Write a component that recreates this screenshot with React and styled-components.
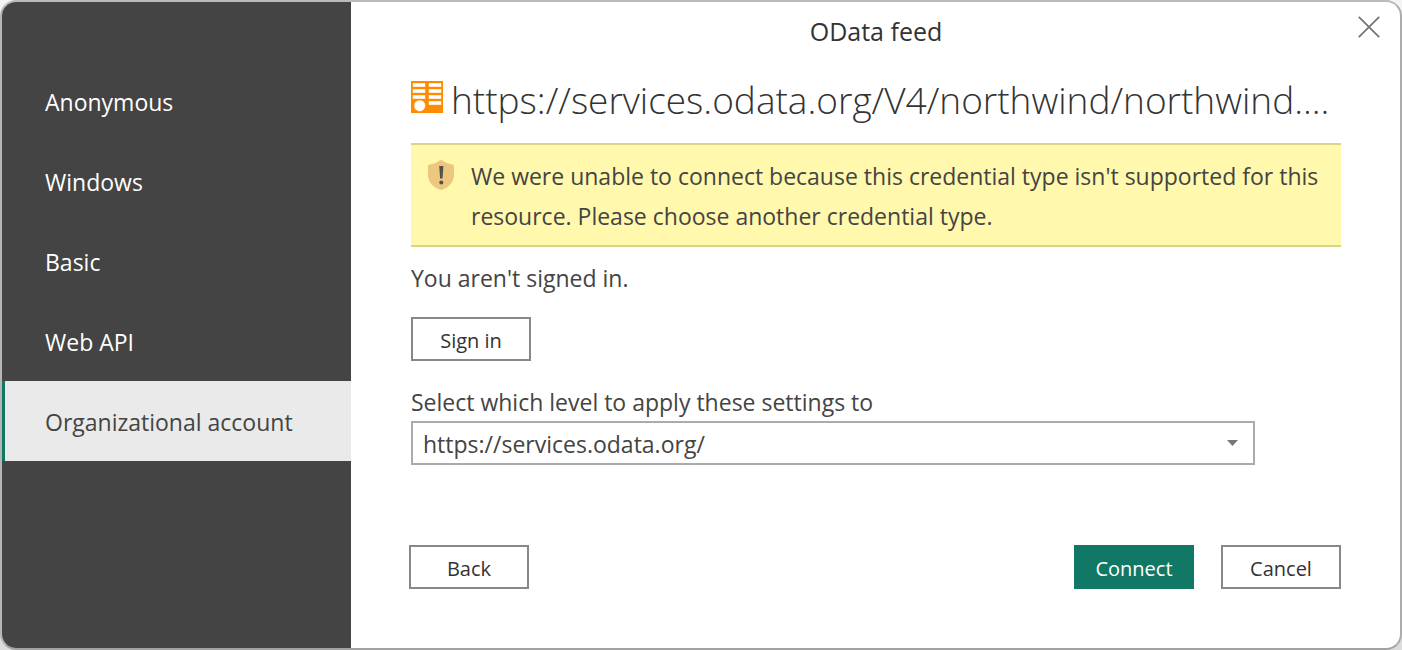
import React, { useState } from "react";
import styled, { createGlobalStyle } from "styled-components";

const GlobalStyle = createGlobalStyle`
  *, *::before, *::after { box-sizing: border-box; }
  body {
    margin: 0;
    background: linear-gradient(#f4f4f4, #dcdcdc);
    color: #444444;
    font-family: "Open Sans", "Noto Sans", sans-serif;
    font-size: 23px;
    line-height: 32px;
  }
  button, select { font-family: inherit; color: inherit; }
  h1, h2, p { margin: 0; font-weight: 400; }
`;

const Dialog = styled.div`
  display: flex;
  min-height: 100vh;
  border: 2px solid;
  border-color: #bababa #acacac #a2a2a2 #b6b6b6;
  border-radius: 16px;
  background: #ffffff;
  overflow: hidden;
`;

const Sidebar = styled.nav`
  flex: 0 0 349px;
  padding-top: 59px;
  background: #444444;
`;

const NavItem = styled.button`
  display: block;
  width: 100%;
  height: 80px;
  padding: 2px 16px 0 40px;
  border: 0;
  border-left: 3px solid ${(p) => (p.$selected ? "#117865" : "transparent")};
  background: ${(p) => (p.$selected ? "#eaeaea" : "transparent")};
  color: ${(p) => (p.$selected ? "#444444" : "#ffffff")};
  font-size: 23px;
  line-height: 32px;
  text-align: left;
  cursor: pointer;
`;

const Main = styled.main`
  position: relative;
  flex: 1;
  min-width: 0;
  display: flex;
  flex-direction: column;
  padding: 12px 59px 59px 60px;
`;

const Title = styled.h1`
  font-size: 25px;
  line-height: 34px;
  color: #333333;
  text-align: center;
`;

const CloseButton = styled.button`
  position: absolute;
  top: 7px;
  right: 14px;
  display: flex;
  padding: 5px;
  border: 0;
  background: transparent;
  cursor: pointer;
`;

const Source = styled.div`
  display: flex;
  align-items: flex-start;
  gap: 8px;
  margin-top: 21px;
  padding-top: 12px;
`;

const SourceIcon = styled.svg`
  flex: none;
`;

const SourceUrl = styled.h2`
  flex: 1;
  min-width: 0;
  height: 62px;
  margin-top: -8px;
  font-size: 37px;
  font-weight: 300;
  line-height: 54px;
  color: #333333;
  white-space: nowrap;
`;

const Warning = styled.div`
  display: flex;
  gap: 17px;
  margin-top: 8px;
  padding: 11px 16px 9px 17px;
  border: solid #d8d58b;
  border-width: 2px 0;
  background: #fff8ad;
  line-height: 40px;
`;

const Shield = styled.svg`
  flex: none;
  margin-top: 4px;
`;

const Status = styled.p`
  margin-top: 15px;
`;

const Button = styled.button`
  width: 120px;
  height: 44px;
  padding: 4px 0 0;
  border: 2px solid ${(p) => (p.$primary ? "#117865" : "#888888")};
  background: ${(p) => (p.$primary ? "#117865" : "#ffffff")};
  color: ${(p) => (p.$primary ? "#ffffff" : "#333333")};
  font-size: 20px;
  line-height: 28px;
  cursor: pointer;
`;

const SignInButton = styled(Button)`
  margin-top: 23px;
`;

const Label = styled.label`
  display: block;
  margin-top: 25px;
  margin-bottom: 3px;
`;

const SelectBox = styled.div`
  display: grid;
  align-items: center;
  margin-right: 86px;
  > * { grid-area: 1 / 1; }
`;

const Select = styled.select`
  appearance: none;
  width: 100%;
  height: 44px;
  padding: 2px 40px 0 10px;
  border: 2px solid #ababab;
  border-radius: 0;
  background: #ffffff;
  font-size: 23px;
`;

const Arrow = styled.svg`
  justify-self: end;
  margin-right: 17px;
  pointer-events: none;
`;

const Footer = styled.footer`
  display: flex;
  gap: 27px;
  margin-top: auto;
  margin-left: -2px;
  padding-top: 32px;
`;

const BackButton = styled(Button)`
  margin-right: auto;
`;

const kinds = ["Anonymous", "Windows", "Basic", "Web API", "Organizational account"];

export default function App() {
  const [kind, setKind] = useState("Organizational account");
  return (
    <>
      <GlobalStyle />
      <Dialog role="dialog" aria-labelledby="dialog-title">
        <Sidebar aria-label="Credential type">
          {kinds.map((k) => (
            <NavItem key={k} $selected={k === kind} onClick={() => setKind(k)}>
              {k}
            </NavItem>
          ))}
        </Sidebar>
        <Main>
          <Title id="dialog-title">OData feed</Title>
          <CloseButton aria-label="Close">
            <svg width="24" height="24" viewBox="0 0 24 24" fill="none" stroke="#767676" strokeWidth="1.8">
              <path d="M1.8 2.8 22.2 23.2M22.2 2.8 1.8 23.2" />
            </svg>
          </CloseButton>
          <Source>
            <SourceIcon width="32" height="32" viewBox="0 0 32 32" aria-hidden="true">
              <rect width="32" height="32" fill="#ff8c00" />
              <g fill="#ffffff">
                <rect x="1.800" y="2.200" width="12.400" height="3.600" />
                <rect x="1.800" y="8.200" width="12.400" height="3.600" />
                <rect x="1.800" y="14.200" width="12.400" height="3.600" />
                <rect x="17.800" y="2.200" width="12.400" height="3.600" />
                <rect x="17.800" y="8.200" width="12.400" height="3.600" />
                <rect x="17.800" y="14.200" width="12.400" height="3.600" />
                <rect x="17.800" y="20.200" width="12.400" height="3.600" />
              </g>
              <circle cx="8.700" cy="24.700" r="5.800" fill="#ffffff" stroke="#ff8c00" strokeWidth="0.6" />
            </SourceIcon>
            <SourceUrl>https://services.odata.org/V4/northwind/northwind....</SourceUrl>
          </Source>
          <Warning role="alert">
            <Shield width="26" height="30" viewBox="0 0 26 30" aria-hidden="true">
              <path
                d="M11.500 0.600Q13 -0.500 14.500 0.600C18 3.200 21 4.300 24.500 4.400Q26 4.500 26 6V15C26 22 20.500 27.500 14 29.700Q13 30 12 29.700C5.500 27.500 0 22 0 15V6Q0 4.500 1.500 4.400C5 4.300 8 3.200 11.500 0.600Z"
                fill="#edc77e"
              />
              <path d="M11.200 6H15.400L14.500 18.500H12.100Z" fill="#505050" />
              <circle cx="13.300" cy="22.500" r="2" fill="#505050" />
            </Shield>
            <p>
              We were unable to connect because this credential type isn't supported for this
              resource. Please choose another credential type.
            </p>
          </Warning>
          <Status>You aren't signed in.</Status>
          <SignInButton>Sign in</SignInButton>
          <Label htmlFor="level">Select which level to apply these settings to</Label>
          <SelectBox>
            <Select id="level" defaultValue="https://services.odata.org/">
              <option>https://services.odata.org/</option>
            </Select>
            <Arrow width="11" height="6" viewBox="0 0 11 6" aria-hidden="true">
              <path d="M0 0H11L5.500 6Z" fill="#777777" />
            </Arrow>
          </SelectBox>
          <Footer>
            <BackButton>Back</BackButton>
            <Button $primary>Connect</Button>
            <Button>Cancel</Button>
          </Footer>
        </Main>
      </Dialog>
    </>
  );
}
